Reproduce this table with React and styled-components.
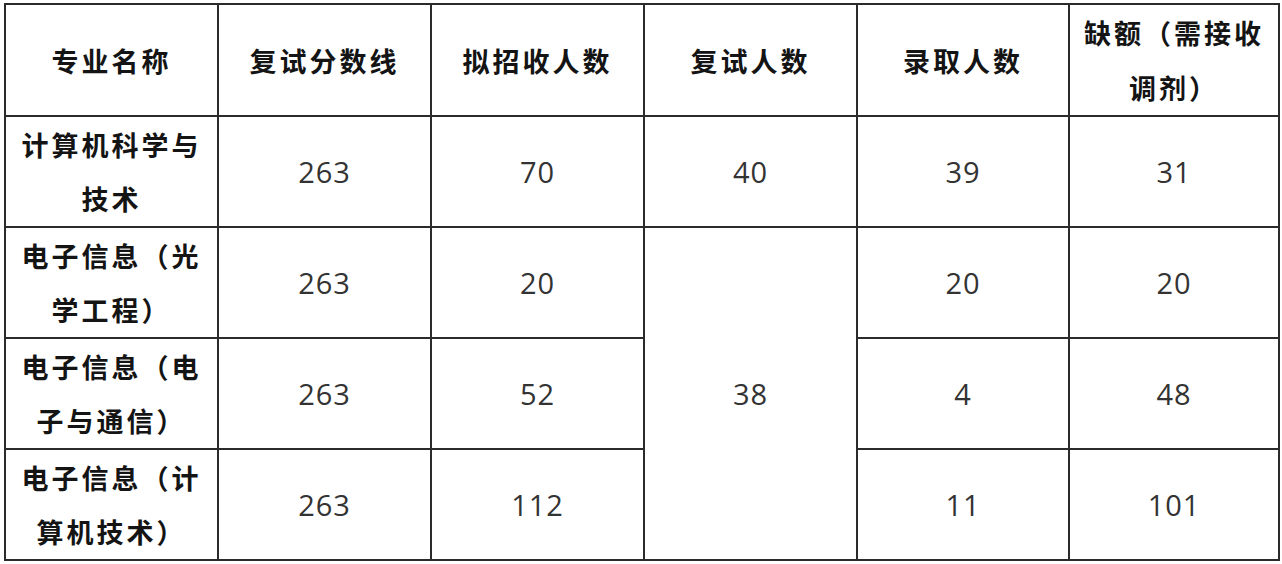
import React from 'react';
import styled, { createGlobalStyle } from 'styled-components';

const GlobalStyle = createGlobalStyle`
  html, body {
    margin: 0;
    padding: 0;
    background: #ffffff;
  }
`;

const Page = styled.div`
  padding: 3px 0 0 4px;
  width: 1282px;
  height: 564px;
  box-sizing: border-box;
  background: #ffffff;
`;

const Table = styled.table`
  border-collapse: collapse;
  table-layout: fixed;
  width: 1274px;
  font-family: "Noto Sans CJK SC", "Noto Sans", sans-serif;
`;

const Col = styled.col`
  width: ${(p) => p.w}px;
`;

const Cell = styled.td`
  border: 2px solid #2b2b2b;
  padding: 0;
  text-align: center;
  vertical-align: middle;
  height: ${(p) => (p.head ? 110 : 109)}px;
`;

const HeadCell = styled(Cell)`
  font-size: 27px;
  font-weight: 700;
  color: #141414;
  letter-spacing: 3px;
  line-height: 55px;
`;

const NameCell = styled(Cell)`
  font-size: 27px;
  font-weight: 700;
  color: #141414;
  letter-spacing: 3px;
  line-height: 54px;
`;

const NumCell = styled(Cell)`
  font-family: "Open Sans", "Noto Sans", sans-serif;
  font-size: 29px;
  font-weight: 400;
  color: #333333;
  letter-spacing: 1px;
`;

const headers = [
  ['专业名称'],
  ['复试分数线'],
  ['拟招收人数'],
  ['复试人数'],
  ['录取人数'],
  ['缺额（需接收', '调剂）'],
];

const rows = [
  { name: ['计算机科学与', '技术'], line: 263, plan: 70, retest: 40, admit: 39, gap: 31 },
  { name: ['电子信息（光', '学工程）'], line: 263, plan: 20, retest: 38, admit: 20, gap: 20 },
  { name: ['电子信息（电', '子与通信）'], line: 263, plan: 52, admit: 4, gap: 48 },
  { name: ['电子信息（计', '算机技术）'], line: 263, plan: 112, admit: 11, gap: 101 },
];

const widths = [213, 213, 213, 213, 212, 210];

const Lines = ({ parts }) =>
  parts.map((t, i) => (
    <React.Fragment key={i}>
      {i > 0 && <br />}
      {t}
    </React.Fragment>
  ));

export default function App() {
  return (
    <Page>
      <GlobalStyle />
      <Table>
        <colgroup>
          {widths.map((w, i) => (
            <Col key={i} w={w} />
          ))}
        </colgroup>
        <thead>
          <tr>
            {headers.map((h, i) => (
              <HeadCell as="th" head key={i}>
                <Lines parts={h} />
              </HeadCell>
            ))}
          </tr>
        </thead>
        <tbody>
          {rows.map((r, i) => (
            <tr key={i}>
              <NameCell>
                <Lines parts={r.name} />
              </NameCell>
              <NumCell>{r.line}</NumCell>
              <NumCell>{r.plan}</NumCell>
              {i === 0 && <NumCell>{r.retest}</NumCell>}
              {i === 1 && <NumCell rowSpan={3}>{r.retest}</NumCell>}
              <NumCell>{r.admit}</NumCell>
              <NumCell>{r.gap}</NumCell>
            </tr>
          ))}
        </tbody>
      </Table>
    </Page>
  );
}
